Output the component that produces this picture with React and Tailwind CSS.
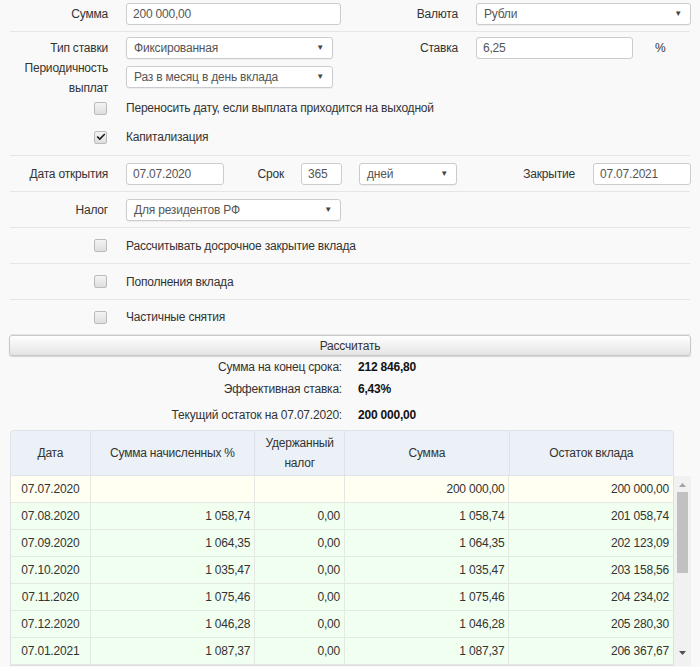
import { Check } from "lucide-react";

const rows = [
  ["07.07.2020", "", "", "200 000,00", "200 000,00"],
  ["07.08.2020", "1 058,74", "0,00", "1 058,74", "201 058,74"],
  ["07.09.2020", "1 064,35", "0,00", "1 064,35", "202 123,09"],
  ["07.10.2020", "1 035,47", "0,00", "1 035,47", "203 158,56"],
  ["07.11.2020", "1 075,46", "0,00", "1 075,46", "204 234,02"],
  ["07.12.2020", "1 046,28", "0,00", "1 046,28", "205 280,30"],
  ["07.01.2021", "1 087,37", "0,00", "1 087,37", "206 367,67"],
];

function Input({ value, className }) {
  return (
    <div
      className={`flex h-[22px] shrink-0 items-center rounded-[3px] border border-[#ccc] bg-white pl-[6px] text-[#555] ${className}`}
    >
      {value}
    </div>
  );
}

function Select({ value, className }) {
  return (
    <div
      className={`flex h-[22px] shrink-0 items-center justify-between rounded-[3px] border border-[#ccc] bg-white pr-[8px] pl-[7px] text-[#555] shadow-[0_1px_1px_rgba(0,0,0,0.05)] ${className}`}
    >
      <span>{value}</span>
      <span className="text-[8px] text-[#444]">▼</span>
    </div>
  );
}

function Checkbox({ checked }) {
  return (
    <div className="flex h-[13px] w-[13px] items-center justify-center rounded-[2px] border border-[#bbb] bg-gradient-to-b from-[#f4f4f4] to-[#dedede]">
      {checked && <Check size={10} strokeWidth={4} className="text-[#222]" />}
    </div>
  );
}

function CheckRow({ label, checked, className = "" }) {
  return (
    <div className={`flex items-center ${className}`}>
      <div className="flex w-[108px] justify-end pr-[1px]">
        <Checkbox checked={checked} />
      </div>
      <span className="ml-[18px]">{label}</span>
    </div>
  );
}

function Sep() {
  return <div className="mx-[10px] h-px bg-[#e6e6e6]" />;
}

export default function App() {
  const cols = ["w-[80px]", "w-[165px]", "w-[90px]", "w-[165px]", "w-[164px]"];

  return (
    <div className="h-[667px] w-[700px] overflow-hidden bg-[#f9f9f9] font-['Liberation_Sans',Arial,sans-serif] text-[12px] tracking-[-0.2px] text-[#333]">
      {/* сумма / валюта */}
      <div className="flex h-[31px] items-center pb-[4px]">
        <div className="flex w-[350px] items-center">
          <span className="w-[108px] text-right">Сумма</span>
          <Input value="200 000,00" className="ml-[18px] w-[215px]" />
        </div>
        <div className="flex items-center">
          <span className="w-[108px] text-right">Валюта</span>
          <Select value="Рубли" className="ml-[18px] w-[215px]" />
        </div>
      </div>
      <Sep />

      {/* ставка */}
      <div className="flex h-[32px] items-center">
        <div className="flex w-[350px] items-center">
          <span className="w-[108px] text-right">Тип ставки</span>
          <Select value="Фиксированная" className="ml-[18px] w-[207px]" />
        </div>
        <div className="flex items-center">
          <span className="w-[108px] text-right">Ставка</span>
          <Input value="6,25" className="ml-[18px] w-[157px]" />
          <span className="ml-[22px]">%</span>
        </div>
      </div>
      <div className="flex h-[26px] items-center">
        <span className="w-[108px] shrink-0 pt-[1px] text-right leading-[20px]">
          Периодичность
          <br />
          выплат
        </span>
        <Select value="Раз в месяц в день вклада" className="ml-[18px] w-[207px]" />
      </div>
      <CheckRow label="Переносить дату, если выплата приходится на выходной" className="h-[36px]" />
      <CheckRow label="Капитализация" checked className="h-[22px]" />
      <div className="h-[7px]" />
      <Sep />

      {/* даты */}
      <div className="flex h-[35px] items-center">
        <span className="w-[108px] text-right">Дата открытия</span>
        <Input value="07.07.2020" className="ml-[18px] w-[98px]" />
        <span className="w-[60px] text-right">Срок</span>
        <Input value="365" className="ml-[17px] w-[41px]" />
        <Select value="дней" className="ml-[17px] w-[98px]" />
        <span className="w-[118px] text-right">Закрытие</span>
        <Input value="07.07.2021" className="ml-[18px] w-[98px]" />
      </div>
      <Sep />

      <div className="flex h-[35px] items-center">
        <span className="w-[108px] text-right">Налог</span>
        <Select value="Для резидентов РФ" className="ml-[18px] w-[215px]" />
      </div>
      <Sep />
      <CheckRow label="Рассчитывать досрочное закрытие вклада" className="h-[35px]" />
      <Sep />
      <CheckRow label="Пополнения вклада" className="h-[35px]" />
      <Sep />
      <CheckRow label="Частичные снятия" className="h-[34px]" />
      <Sep />

      {/* кнопка */}
      <div className="px-[9px]">
        <div className="flex h-[21px] items-center justify-center rounded-[3px] border border-[#c8c8c8] bg-gradient-to-b from-white to-[#e4e4e4] shadow-[0_1px_1px_rgba(0,0,0,0.15)]">
          Рассчитать
        </div>
      </div>

      {/* итоги */}
      <div className="flex flex-col">
        {[
          ["Сумма на конец срока:", "212 846,80", "h-[22px]"],
          ["Эффективная ставка:", "6,43%", "h-[22px]"],
          ["Текущий остаток на 07.07.2020:", "200 000,00", "h-[26px] pt-[3px]"],
        ].map(([l, v, h]) => (
          <div key={l} className={`flex items-center ${h}`}>
            <span className="w-[342px] text-right">{l}</span>
            <span className="ml-[16px] font-bold text-[#111]">{v}</span>
          </div>
        ))}
      </div>

      {/* таблица */}
      <div className="mt-[4px] ml-[10px]">
        <div className="flex h-[46px] w-[664px] rounded-t-[4px] border border-[#dde3e8] bg-[#ebf1f6]">
          {["Дата", "Сумма начисленных %", "Удержанный налог", "Сумма", "Остаток вклада"].map((h, i) => (
            <div
              key={h}
              className={`flex items-center justify-center text-center leading-[20px] ${cols[i]} ${i < 4 ? "border-r border-[#dde3e8]" : ""} ${i === 2 ? "px-[12px]" : ""}`}
            >
              {h}
            </div>
          ))}
        </div>
        <div className="flex">
          <div className="w-[664px] shrink-0 border-x border-b border-[#e0e0e0]">
            {rows.map((r, ri) => (
              <div
                key={r[0]}
                className={`flex h-[27px] border-b border-[#e3e8e3] ${ri === 0 ? "bg-[#fffff2]" : "bg-[#f0fff0]"}`}
              >
                {r.map((c, ci) => (
                  <div
                    key={ci}
                    className={`flex items-center ${cols[ci]} ${ci === 0 ? "justify-center" : "justify-end pr-[4px]"} ${ci < 4 ? "border-r border-[#e3e8e3]" : ""}`}
                  >
                    {c}
                  </div>
                ))}
              </div>
            ))}
          </div>
          <div className="flex w-[17px] shrink-0 flex-col items-center bg-[#f1f1f1]">
            <svg width="7" height="4" viewBox="0 0 7 4" className="mt-[7px] shrink-0">
              <path d="M0 4 L3.5 0 L7 4 Z" fill="#a3a3a3" />
            </svg>
            <div className="mt-[5px] h-[81px] w-[11px] shrink-0 bg-[#c1c1c1]" />
            <svg width="7" height="4" viewBox="0 0 7 4" className="mt-[78px] shrink-0">
              <path d="M0 0 L7 0 L3.5 4 Z" fill="#505050" />
            </svg>
          </div>
        </div>
      </div>
    </div>
  );
}
